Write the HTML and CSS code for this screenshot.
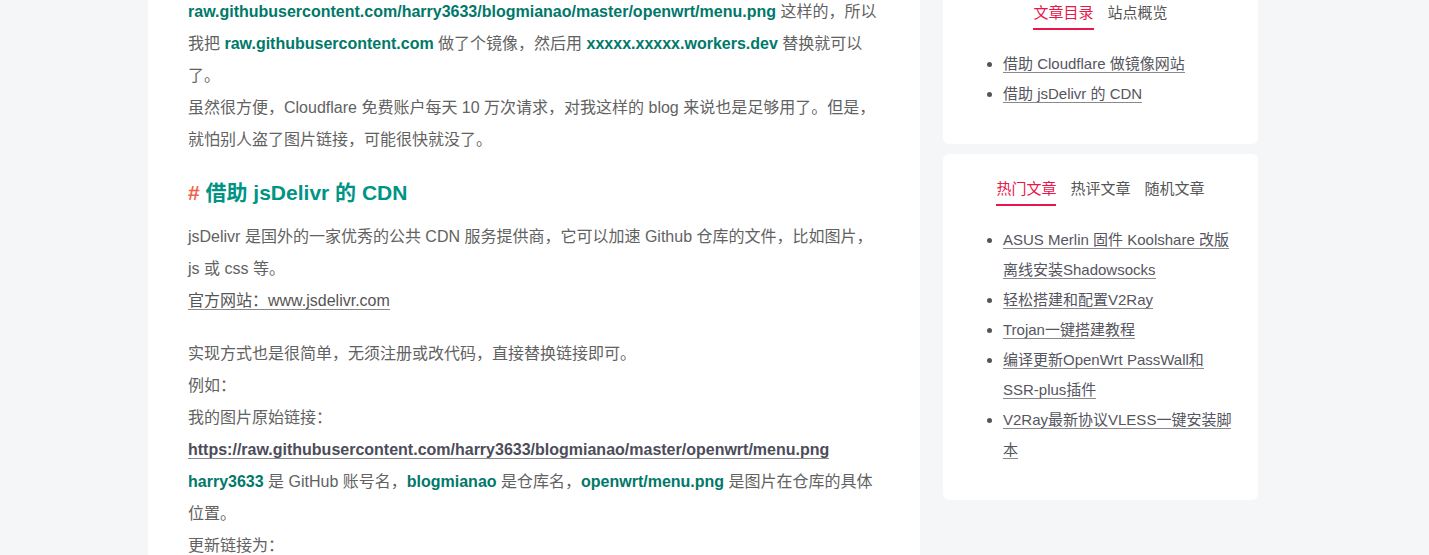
FILE: index.html
```html
<!DOCTYPE html>
<html lang="zh-CN">
<head>
<meta charset="utf-8">
<title>借助 jsDelivr 的 CDN</title>
<link rel="stylesheet" href="styles.css">
</head>
<body>
<div class="layout">
  <main class="article">
    <p>Github 上的图片在国内访问很慢，因为原始图片链接都是
      <strong class="hl">raw.githubusercontent.com/harry3633/blogmianao/master/openwrt/menu.png</strong> 这样的，所以我把 <strong class="hl">raw.githubusercontent.com</strong> 做了个镜像，然后用 <strong class="hl">xxxxx.xxxxx.workers.dev</strong> 替换就可以了。<br>
      虽然很方便，Cloudflare 免费账户每天 10 万次请求，对我这样的 blog 来说也是足够用了。但是，就怕别人盗了图片链接，可能很快就没了。</p>
    <h2 class="heading"><span class="hash">#</span> 借助 jsDelivr 的 CDN</h2>
    <p>jsDelivr 是国外的一家优秀的公共 CDN 服务提供商，它可以加速 Github 仓库的文件，比如图片，js 或 css 等。<br>
      <a class="link" href="#">官方网站：www.jsdelivr.com</a></p>
    <p>实现方式也是很简单，无须注册或改代码，直接替换链接即可。<br>
      例如：<br>
      我的图片原始链接：<br>
      <a class="link strong-link" href="#">https://raw.githubusercontent.com/harry3633/blogmianao/master/openwrt/menu.png</a><br>
      <strong class="hl">harry3633</strong> 是 GitHub 账号名，<strong class="hl">blogmianao</strong> 是仓库名，<strong class="hl">openwrt/menu.png</strong> 是图片在仓库的具体位置。<br>
      更新链接为：<br>
      https://cdn.jsdelivr.net/gh/harry3633/blogmianao/openwrt/menu.png</p>
  </main>
  <aside class="sidebar">
    <section class="card card-toc">
      <nav class="tabs">
        <span class="tab active">文章目录</span>
        <span class="tab">站点概览</span>
      </nav>
      <ul class="list">
        <li><a class="link" href="#">借助 Cloudflare 做镜像网站</a></li>
        <li><a class="link" href="#">借助 jsDelivr 的 CDN</a></li>
      </ul>
    </section>
    <section class="card card-posts">
      <nav class="tabs">
        <span class="tab active">热门文章</span>
        <span class="tab">热评文章</span>
        <span class="tab">随机文章</span>
      </nav>
      <ul class="list">
        <li><a class="link" href="#">ASUS Merlin 固件 Koolshare 改版离线安装Shadowsocks</a></li>
        <li><a class="link" href="#">轻松搭建和配置V2Ray</a></li>
        <li><a class="link" href="#">Trojan一键搭建教程</a></li>
        <li><a class="link" href="#">编译更新OpenWrt PassWall和SSR-plus插件</a></li>
        <li><a class="link" href="#">V2Ray最新协议VLESS一键安装脚本</a></li>
      </ul>
    </section>
  </aside>
</div>
</body>
</html>
```
FILE: styles.css
```css
html, body {
  margin: 0;
  padding: 0;
  overflow: hidden;
}
body {
  background: #f5f6f8;
  font-family: "Liberation Sans", "Noto Sans CJK SC", sans-serif;
  color: #626262;
}
.layout {
  display: flex;
  align-items: flex-start;
  gap: 23px;
  margin: -36px 0 0 148px;
}
.article {
  width: 772px;
  box-sizing: border-box;
  padding: 0 40px 40px;
  background: #fff;
  font-size: 16px;
  line-height: 32px;
}
.article p {
  margin: 0 0 21px;
}
.hl {
  color: #00786a;
  font-weight: bold;
}
.heading {
  margin: 0 0 12px;
  font-size: 21px;
  line-height: 32px;
  font-weight: bold;
  color: #009485;
}
.hash {
  color: #f2634a;
}
.link {
  color: #555;
  text-decoration: none;
  border-bottom: 1px solid #8a8a8a;
}
.strong-link {
  font-weight: bold;
  color: #4c4c5a;
}
.sidebar {
  width: 315px;
  display: flex;
  flex-direction: column;
  gap: 10px;
}
.card {
  background: #fff;
  border-radius: 6px;
  padding: 0 20px;
  font-size: 15px;
}
.card-toc {
  padding-top: 36px;
  padding-bottom: 35px;
}
.card-posts {
  padding-top: 22px;
  padding-bottom: 35px;
}
.tabs {
  display: flex;
  justify-content: center;
  gap: 14px;
}
.tab {
  line-height: 22px;
  padding: 2px 0 4px;
  color: #555;
  border-bottom: 2px solid transparent;
}
.tab.active {
  color: #e8174a;
  border-bottom-color: #e8174a;
}
.list {
  margin: 19px 0 0;
  padding-left: 40px;
  line-height: 30px;
  color: #555;
}
.list .link {
  color: #555560;
}
```
